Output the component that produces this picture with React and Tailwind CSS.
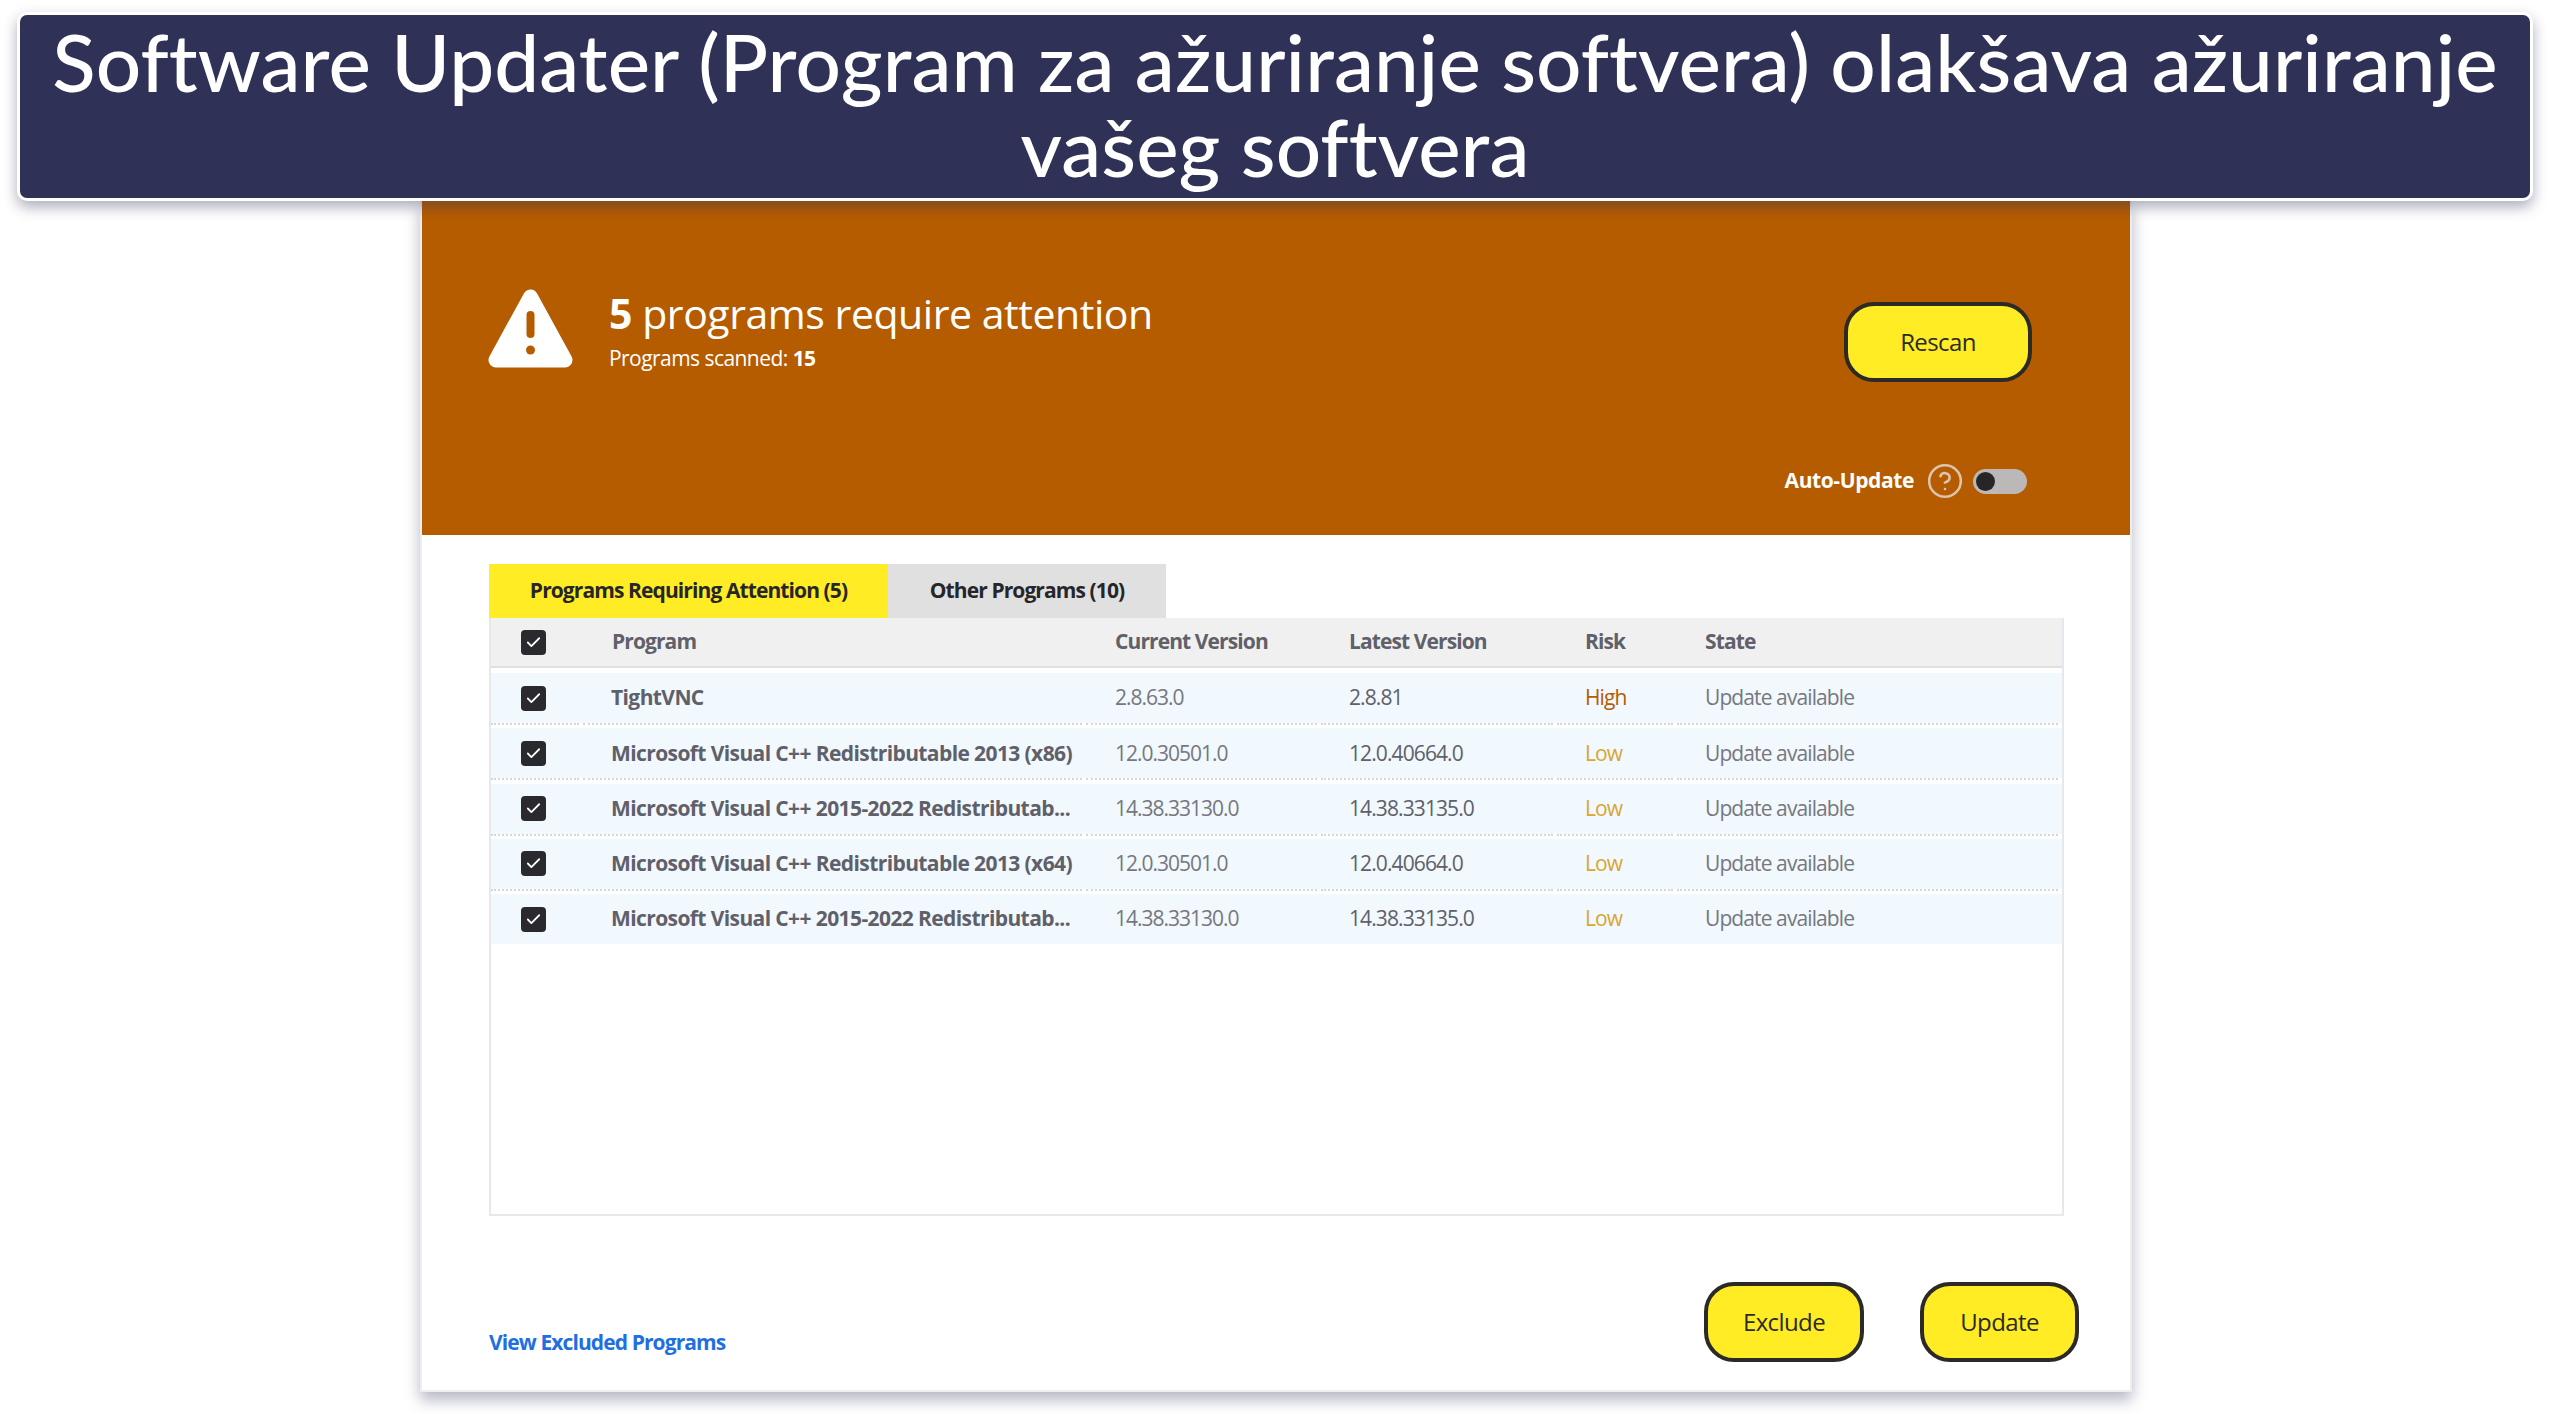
import React from 'react';
import { Check, CircleHelp } from 'lucide-react';

const UI_FONT = 'font-["Open_Sans","Noto_Sans",sans-serif]';
const COLS = 'grid grid-cols-[92px_503px_235px_236px_120px_385px]';

const rows = [
  { name: 'TightVNC', current: '2.8.63.0', latest: '2.8.81', risk: 'High' },
  { name: 'Microsoft Visual C++ Redistributable 2013 (x86)', current: '12.0.30501.0', latest: '12.0.40664.0', risk: 'Low' },
  { name: 'Microsoft Visual C++ 2015-2022 Redistributab...', current: '14.38.33130.0', latest: '14.38.33135.0', risk: 'Low' },
  { name: 'Microsoft Visual C++ Redistributable 2013 (x64)', current: '12.0.30501.0', latest: '12.0.40664.0', risk: 'Low' },
  { name: 'Microsoft Visual C++ 2015-2022 Redistributab...', current: '14.38.33130.0', latest: '14.38.33135.0', risk: 'Low' },
];

function Checkbox() {
  return (
    <div className="flex h-[25px] w-[25px] items-center justify-center rounded-[4px] bg-[#2a2a2e]">
      <Check size={17} strokeWidth={2.5} className="text-white" />
    </div>
  );
}

function YellowButton({ children, className }) {
  return (
    <button className={`flex h-[80px] items-center justify-center rounded-[30px] border-[4px] border-[#2b2a26] bg-[#ffec24] text-[24px] font-medium tracking-[-0.6px] text-[#2b2a26] ${className}`}>
      {children}
    </button>
  );
}

function WarningIcon() {
  return (
    <svg width="85" height="79" viewBox="0 0 85 79">
      <path d="M42.5 8 L8 71 L77 71 Z" fill="#fff" stroke="#fff" strokeWidth="15" strokeLinejoin="round" />
      <rect x="38.5" y="22" width="8" height="27" rx="4" fill="#b55c00" />
      <circle cx="42.5" cy="61" r="4.5" fill="#b55c00" />
    </svg>
  );
}

export default function App() {
  return (
    <div className={`h-[1414px] w-[2550px] overflow-hidden bg-white ${UI_FONT}`}>
      {/* Article caption banner */}
      <div className="relative z-10 ml-[17px] mt-[12px] flex h-[189px] w-[2516px] items-center justify-center rounded-[10px] border-[3px] border-white bg-[#2f3157] pb-[5px] text-center font-['Lato',sans-serif] text-[80px] font-medium leading-[85px] tracking-[0.1px] text-white shadow-[0_6px_14px_rgba(47,49,87,0.4)]">
        <span>
          Software Updater (Program za ažuriranje softvera) olakšava ažuriranje
          <br />
          vašeg softvera
        </span>
      </div>

      {/* App window */}
      <div className="ml-[420px] w-[1712px] border-x-2 border-b-2 border-[#eceef2] shadow-[0_8px_14px_rgba(47,49,87,0.35)]">
        <div className="flex h-[334px] flex-col bg-[#b55c00] pl-[66px] pr-[98px] text-white">
          <div className="flex justify-between pt-[88px]">
            <div className="flex gap-[36px]">
              <WarningIcon />
              <div className="-mt-[2px]">
                <div className="text-[41px] leading-[52px] tracking-[-0.45px]">
                  <span className="font-bold">5</span> programs require attention
                </div>
                <div className="pt-[5px] text-[21px] leading-[28px] tracking-[-0.55px]">
                  Programs scanned: <span className="font-bold">15</span>
                </div>
              </div>
            </div>
            <YellowButton className="mt-[13px] w-[188px]">Rescan</YellowButton>
          </div>
          <div className="mr-[5px] mt-[80px] flex items-center justify-end">
            <span className="text-[21px] font-bold tracking-[-0.4px]">Auto-Update</span>
            <CircleHelp size={38} strokeWidth={1.6} className="ml-[12px] text-[#ddc4ad]" />
            <div className="ml-[9px] flex h-[25px] w-[54px] items-center rounded-full bg-[#bdb8b8] pl-[3px]">
              <div className="h-[19px] w-[19px] rounded-full bg-[#262626]" />
            </div>
          </div>
        </div>

        <div className="h-[855px] pl-[67px] pt-[29px]">
          {/* Tabs */}
          <div className="flex h-[54px] text-[21px] font-bold tracking-[-0.9px] text-[#26262a]">
            <div className="flex w-[399px] items-center justify-center bg-[#ffec24]">Programs Requiring Attention (5)</div>
            <div className="flex w-[278px] items-center justify-center bg-[#e0e0e0]">Other Programs (10)</div>
          </div>

          {/* Table */}
          <div className="h-[598px] w-[1575px] border-2 border-t-0 border-[#e6e8ec] text-[21px] tracking-[-0.9px]">
            <div className={`${COLS} h-[50px] items-center border-b-2 border-[#e0e0e0] bg-[#f0f0f0] font-bold text-[#5f6069]`}>
              <div className="flex justify-center pr-[7px]"><Checkbox /></div>
              <div className="pl-[29px]">Program</div>
              <div className="pl-[29px]">Current Version</div>
              <div className="pl-[28px]">Latest Version</div>
              <div className="pl-[28px]">Risk</div>
              <div className="pl-[28px]">State</div>
            </div>
            <div className="pt-[5px]">
              {rows.map((row, i) => (
                <div key={i} className="h-[55.3px]">
                  <div className={`${COLS} h-[50px] items-center bg-[#f1f8fe] text-[#77777f]`}>
                    <div className="flex justify-center pr-[7px]"><Checkbox /></div>
                    <div className="pl-[28px] font-bold whitespace-nowrap tracking-[-0.6px] text-[#5f6069]">{row.name}</div>
                    <div className="pl-[29px] tracking-[-1px]">{row.current}</div>
                    <div className="pl-[28px] text-[#5f6069]">{row.latest}</div>
                    <div className={`pl-[28px] ${row.risk === 'High' ? 'text-[#b55c00]' : 'text-[#d9a62e]'}`}>{row.risk}</div>
                    <div className="pl-[28px]">Update available</div>
                  </div>
                  {i < rows.length - 1 && (
                    <div className={`${COLS} h-[2px]`}>
                      {[0, 1, 2, 3, 4, 5].map((c) => (
                        <div key={c} className="mr-[4px] border-b-2 border-dotted border-[#d6d6d6]" />
                      ))}
                    </div>
                  )}
                </div>
              ))}
            </div>
          </div>

          {/* Footer */}
          <div className="flex items-end justify-between pr-[51px] pt-[66px]">
            <a className="pb-[4px] text-[21px] font-bold tracking-[-0.9px] text-[#1f6fe0]">View Excluded Programs</a>
            <div className="flex gap-[56px]">
              <YellowButton className="w-[160px]">Exclude</YellowButton>
              <YellowButton className="w-[159px]">Update</YellowButton>
            </div>
          </div>
        </div>
      </div>
    </div>
  );
}
